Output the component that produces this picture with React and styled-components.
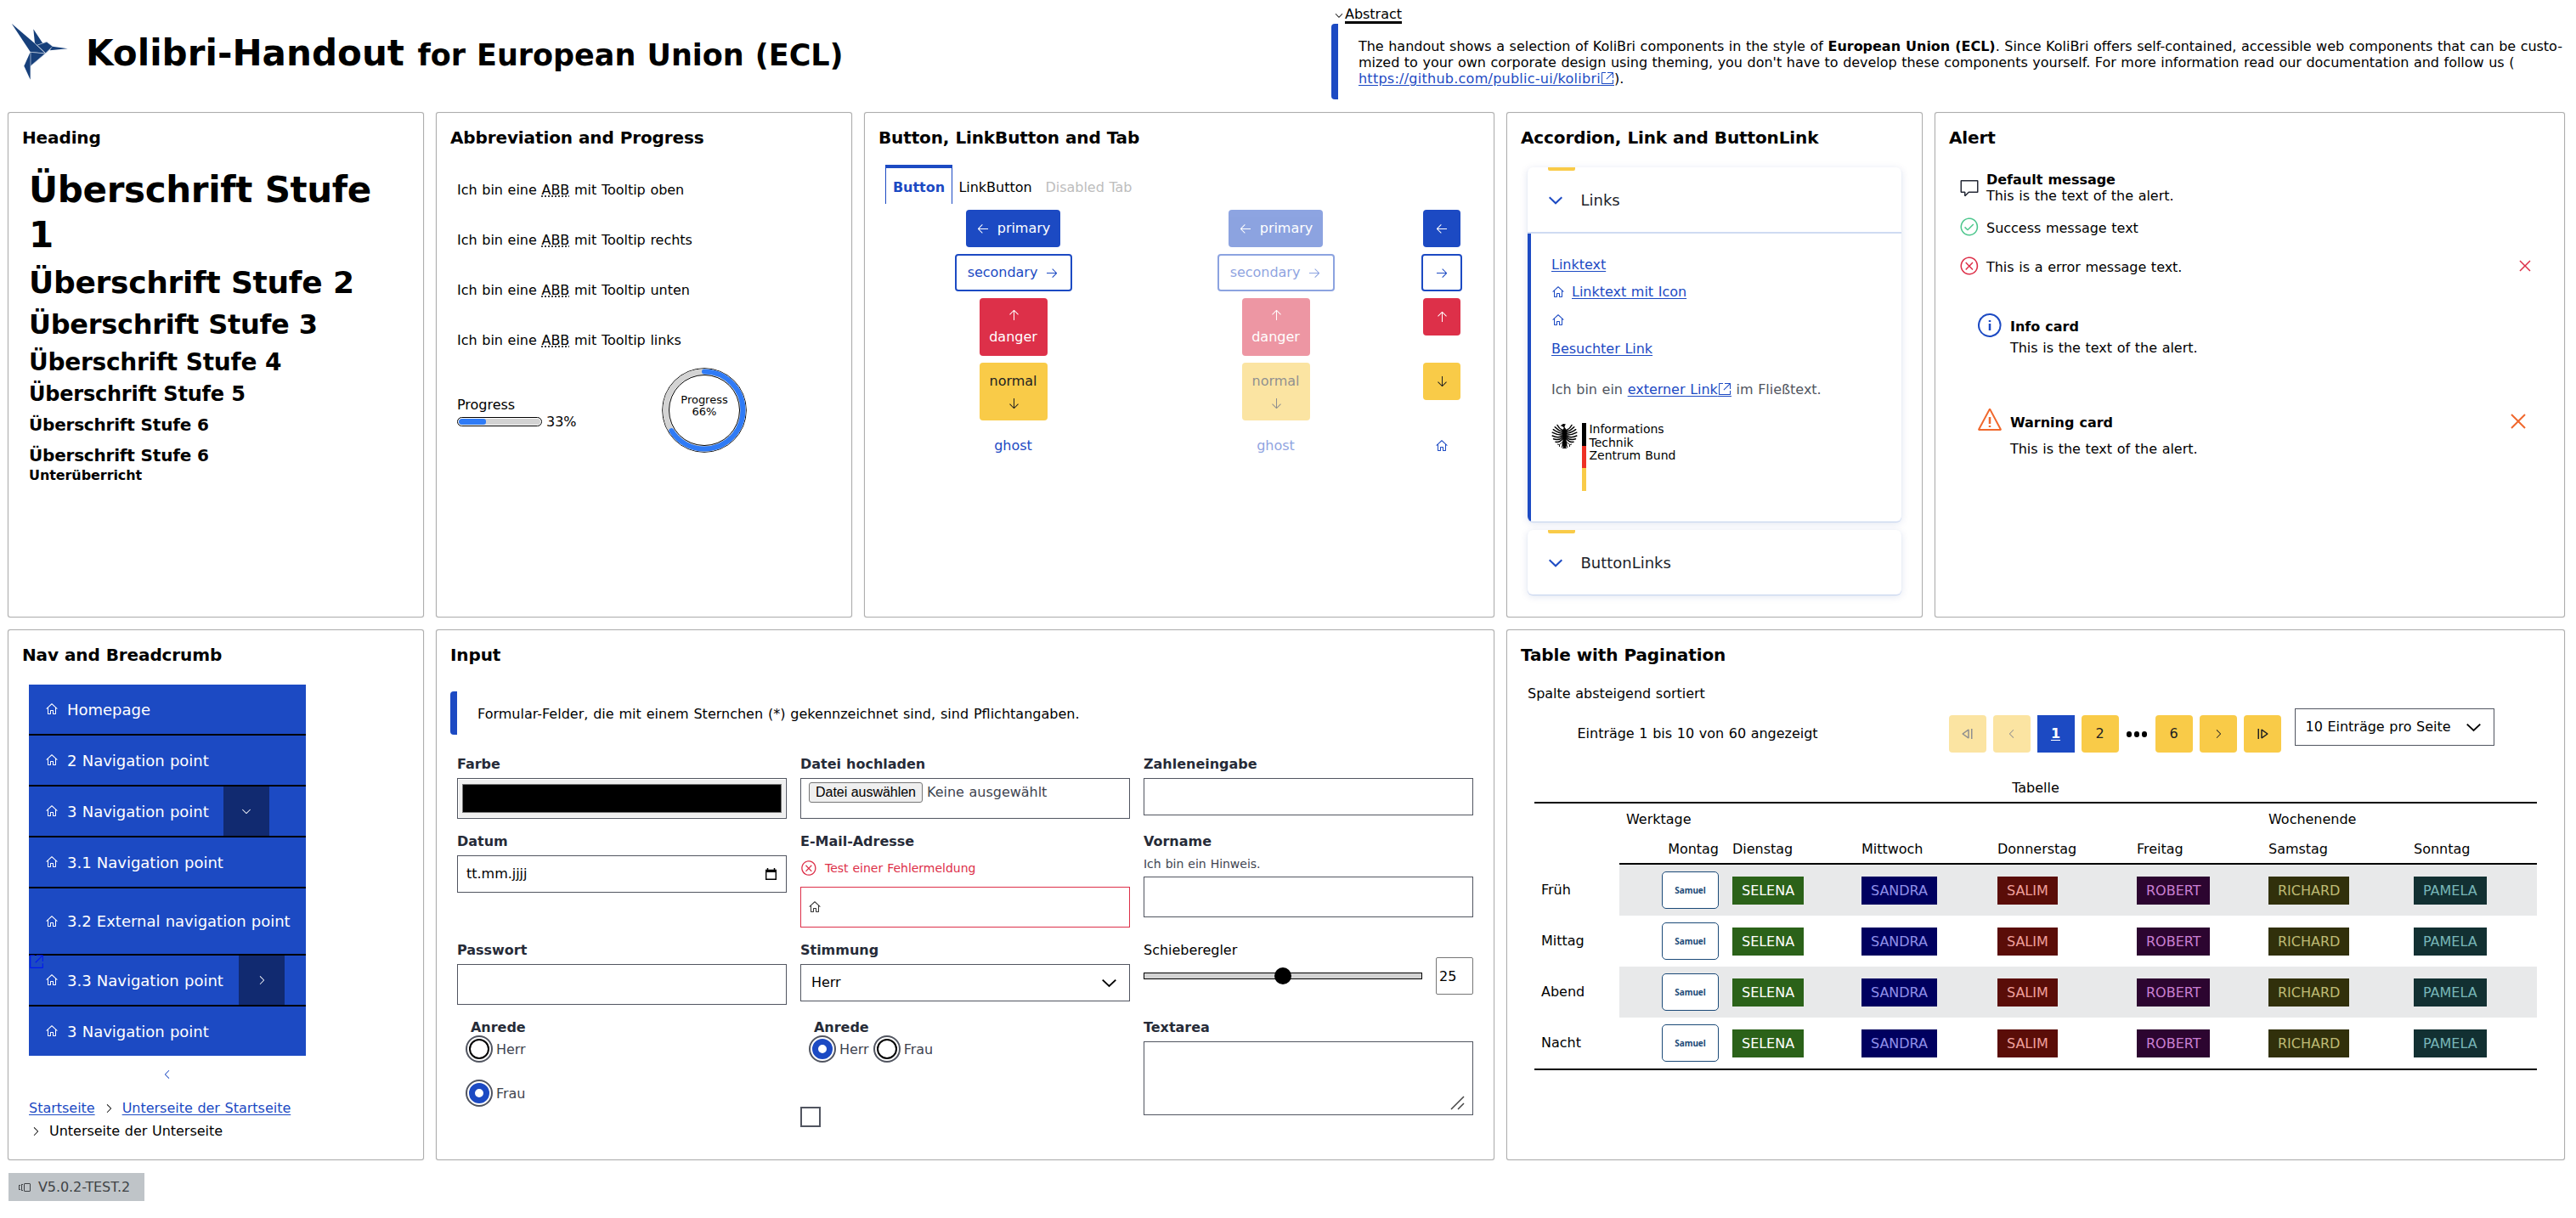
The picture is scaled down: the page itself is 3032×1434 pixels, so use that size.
import React from 'react';
import styled, { createGlobalStyle, css } from 'styled-components';
import {
  VscArrowLeft, VscArrowRight, VscArrowUp, VscArrowDown, VscHome, VscChevronDown, VscChevronRight,
  VscChevronLeft, VscLinkExternal, VscComment, VscPass, VscError, VscInfo, VscWarning, VscClose,
  VscVersions, VscDebugReverseContinue, VscDebugContinue,
} from 'react-icons/vsc';

const BLUE = '#1c4ac3';
const YELLOW = '#f9cb48';
const RED = '#dd3049';
const GREY = '#515560';

const GlobalStyle = createGlobalStyle`
  * { box-sizing: border-box; margin: 0; padding: 0; }
  body { background: #fff; }
  #root {
    font: 16px/20px Verdana, "DejaVu Sans", sans-serif;
    color: #000;
    letter-spacing: -0.02px;
    word-spacing: 0.6px;
  }
  button { letter-spacing: inherit; word-spacing: inherit; }
  svg { display: block; flex: none; }
  a { color: ${BLUE}; text-decoration: underline; text-underline-offset: 2px; }
`;

const Page = styled.div`
  width: 3032px;
  height: 1434px;
  padding: 0 14px 0 10px;
  overflow: hidden;
`;
const Header = styled.header`
  display: flex;
  height: 133px;
`;
const Brand = styled.div`
  display: flex;
  align-items: flex-start;
  width: 1558px;
  padding: 26.5px 0 0 3px;
`;
const PageTitle = styled.h1`
  font-size: 42px;
  line-height: 52px;
  margin: 10px 0 0 20px;
  white-space: nowrap;
  letter-spacing: 0.001em;
  word-spacing: 0.02em;
`;
const SubTitle = styled.span`
  font-size: 35px;
  letter-spacing: -0.001em;
  word-spacing: 0.03em;
`;
const Abstract = styled.section`
  padding-top: 7px;
  width: 1452px;
`;
const Summary = styled.div`
  display: flex;
  align-items: center;
  height: 21px;
  padding-left: 2px;
`;
const SummaryText = styled.span`
  border-bottom: 3px solid #000;
  height: 21px;
  line-height: 20px;
`;
const BarNote = styled.div`
  border-left: 8px solid ${BLUE};
  border-radius: 4px 0 0 4px;
  min-height: ${(p) => p.$h}px;
  padding: ${(p) => p.$pt}px 0 0 ${(p) => p.$pl}px;
  margin-top: ${(p) => p.$mt || 0}px;
  line-height: ${(p) => p.$lh || 20}px;
  letter-spacing: ${(p) => (p.$dense ? '-0.0016em' : '0')};
  word-spacing: ${(p) => (p.$dense ? '0.033em' : '0.05em')};
  white-space: nowrap;
`;
const RepoLink = styled.a`
  letter-spacing: 0.016em;
`;
const InlineIcon = styled.span`
  display: inline-block;
  vertical-align: -3px;
  border-bottom: 1px solid ${BLUE};
  color: ${BLUE};
`;

const Grid = styled.main`
  display: grid;
  grid-template-columns: repeat(12, 236px);
  grid-template-rows: 593px 623px;
  gap: 16px;
`;
const Card = styled.section`
  grid-column: span ${(p) => p.$span};
  padding: 16px;
  border-radius: 2px;
  box-shadow: 0 0 0 1px #aeaeae, 0 0 2px 1px rgba(0, 0, 0, 0.12);
`;
const CardTitle = styled.h2`
  font-size: 20px;
  line-height: 26px;
  letter-spacing: -0.006em;
  word-spacing: 0.01em;
  white-space: nowrap;
`;
const Body = styled.div`
  padding: ${(p) => p.$pt || 0}px 8px 0;
`;

const Heading = styled.div`
  font-weight: 700;
  font-size: ${(p) => p.$size}px;
  line-height: 1.25;
  letter-spacing: ${(p) => p.$track || '-0.009em'};
  word-spacing: 0.01em;
  margin-top: ${(p) => p.$mt || 0}px;
`;

const AbbrLine = styled.p`
  margin-bottom: 39px;
  white-space: nowrap;
`;
const Abbr = styled.abbr`
  text-decoration: underline dotted;
  text-underline-offset: 2px;
`;
const ProgressRow = styled.div`
  display: flex;
  margin-top: -16.5px;
`;
const ProgressBox = styled.div`
  width: 241px;
  padding-top: 33.5px;
`;
const BarLine = styled.div`
  display: flex;
  align-items: center;
  gap: 5px;
`;
const Track = styled.div`
  width: 100px;
  height: 11px;
  border: 1px solid #000;
  border-radius: 6px;
  padding: 1px;
`;
const TrackFill = styled.div`
  height: 7px;
  border-radius: 4px;
  background: #d3d3d3;
  overflow: hidden;
`;
const TrackValue = styled.div`
  height: 7px;
  border-radius: 3px;
  background: #2f7bf6;
`;
const Ring = styled.div`
  display: grid;
  align-items: start;
  > * { grid-area: 1 / 1; }
`;
const RingText = styled.div`
  padding-top: 31px;
  text-align: center;
  font-size: 13px;
  line-height: 14px;
`;

const Tabs = styled.div`
  display: flex;
  margin: 19px 0 7px 8px;
`;
const Tab = styled.div`
  width: ${(p) => p.$w}px;
  height: 46px;
  display: flex;
  align-items: center;
  justify-content: center;
  padding-top: 7px;
  ${(p) => p.$active && css`
    color: ${BLUE};
    font-weight: 700;
    padding-top: 3px;
    border: solid ${BLUE};
    border-width: 4px 1px 0;
  `}
  ${(p) => p.$disabled && css`color: #bdbdbd;`}
`;
const ButtonGrid = styled.div`
  display: grid;
  grid-template-columns: 309px 309px 82px;
  justify-items: center;
  align-items: start;
  row-gap: 8px;
  margin-left: 4px;
`;
const variants = {
  primary: css`background: ${BLUE}; color: #fff;`,
  secondary: css`border: 2px solid ${BLUE}; color: ${BLUE};`,
  danger: css`background: ${RED}; color: #fff;`,
  normal: css`background: ${YELLOW}; color: #222;`,
  ghost: css`color: ${BLUE};`,
};
const Button = styled.button`
  font: inherit;
  background: none;
  border: 0;
  border-radius: 4px;
  display: flex;
  flex-direction: ${(p) => (p.$stack ? 'column' : 'row')};
  align-items: center;
  justify-content: center;
  gap: ${(p) => (p.$stack ? 8 : 9)}px;
  width: ${(p) => p.$w}px;
  height: ${(p) => (p.$stack ? 68 : 44)}px;
  opacity: ${(p) => (p.$disabled ? 0.5 : 1)};
  ${(p) => variants[p.$kind]}
`;

const AccordionBox = styled.div`
  position: relative;
  width: 440px;
  margin: ${(p) => p.$mt}px 0 0 8px;
  border-radius: 6px;
  background: #fff;
  box-shadow: 0 1px 1px #c3d1ee, 0 2px 10px rgba(9, 49, 142, 0.13);
`;
const AccordionMark = styled.span`
  position: absolute;
  top: 0;
  left: 24px;
  width: 32px;
  height: 4px;
  background: ${YELLOW};
  border-radius: 0 0 2px 2px;
`;
const AccordionHead = styled.div`
  height: 76px;
  display: flex;
  align-items: center;
  gap: 21.5px;
  padding: 2px 0 0 25px;
  font-size: 18px;
  color: #1d1f2b;
`;
const AccordionBody = styled.div`
  height: 341px;
  border-top: 2px solid #cfdbf2;
  padding: 26.5px 0 0 28px;
  background: linear-gradient(${BLUE}, ${BLUE}) left / 4px 100% no-repeat;
  border-radius: 0 0 6px 6px;
`;
const LinkLine = styled.div`
  display: flex;
  align-items: center;
  height: 20px;
  gap: 8px;
  margin-top: ${(p) => p.$mt || 0}px;
  color: ${(p) => p.$color || BLUE};
  white-space: nowrap;
`;
const TextRun = styled.span`
  white-space: pre;
`;
const AgencyLogo = styled.div`
  display: flex;
  align-items: flex-start;
  margin-top: 28.5px;
  font-size: 14px;
  line-height: 15.6px;
`;
const FlagBar = styled.div`
  width: 4.5px;
  height: 80px;
  margin: 0 4px 0 5px;
  background: linear-gradient(#000 33.3%, #ee3124 33.3% 66.6%, ${YELLOW} 66.6%);
`;

const AlertRow = styled.div`
  display: flex;
  align-items: ${(p) => (p.$card ? 'flex-start' : 'center')};
  gap: 8px;
  margin: ${(p) => p.$mt}px 0 0 ${(p) => (p.$card ? 32 : 12)}px;
  padding-right: ${(p) => (p.$card ? 22 : 18)}px;
  color: ${(p) => p.$color};
`;
const AlertText = styled.div`
  flex: 1;
  color: #000;
  line-height: ${(p) => p.$lh || 20}px;
  padding-top: ${(p) => p.$pt || 0}px;
`;
const AlertBody = styled.div`
  margin-top: ${(p) => p.$mt || 0}px;
`;
const CloseSlot = styled.div`
  padding-top: ${(p) => p.$pt || 0}px;
`;

const Nav = styled.ul`
  list-style: none;
  width: 326px;
`;
const NavItem = styled.li`
  position: relative;
  display: flex;
  align-items: center;
  box-sizing: content-box;
  height: ${(p) => p.$h || 58}px;
  padding-left: 19px;
  gap: 10px;
  background: ${BLUE};
  color: #fff;
  font-size: 18px;
  white-space: nowrap;
  border-top: ${(p) => (p.$first ? '0' : '2px solid #000')};
`;
const NavLabel = styled.span`
  padding-top: 1px;
  width: ${(p) => (p.$w ? p.$w + 'px' : 'auto')};
`;
const NavToggle = styled.span`
  align-self: stretch;
  width: 54px;
  display: flex;
  align-items: center;
  justify-content: center;
  background: #112a70;
`;
const NavExternal = styled.span`
  position: absolute;
  left: 0;
  top: -2px;
  color: #0019ee;
`;
const Collapse = styled.div`
  width: 326px;
  display: flex;
  justify-content: center;
  color: ${BLUE};
  margin: 14px 0 22px;
`;
const Crumbs = styled.div`
  display: flex;
  align-items: center;
  gap: 8px;
  margin-bottom: 7px;
  white-space: nowrap;
`;

const Form = styled.div`
  display: grid;
  grid-template-columns: repeat(3, 388px);
  grid-template-rows: 91px 128px 91px auto;
  column-gap: 16px;
  margin: 24.5px 0 0 8px;
  color: #40444f;
`;
const Field = styled.div``;
const Label = styled.div`
  font-weight: ${(p) => (p.$plain ? 400 : 700)};
  color: ${(p) => (p.$plain ? '#000' : '#262b38')};
  margin-left: ${(p) => p.$ml || 0}px;
`;
const Hint = styled.div`
  font-size: 14px;
  margin: 6px 0 5.5px;
`;
const FieldError = styled.div`
  display: flex;
  align-items: center;
  gap: 9px;
  height: 20px;
  margin: 11px 0 12.5px;
  font-size: 14px;
  color: ${RED};
`;
const InputBox = styled.div`
  height: ${(p) => p.$h || 48}px;
  margin-top: ${(p) => (p.$flush ? 0 : 6.5)}px;
  border: 1px solid ${(p) => (p.$error ? RED : GREY)};
  display: flex;
  align-items: ${(p) => p.$align || 'center'};
  justify-content: space-between;
  padding: ${(p) => p.$pad || '0 10px'};
  color: #000;
`;
const ColorWell = styled.div`
  flex: 1;
  align-self: stretch;
  margin: 1px;
  border: 4px solid #efefef;
  border-width: 5px 4px;
  background: #000;
  box-shadow: inset 0 0 0 1px #777;
`;
const FileButton = styled.span`
  font-family: Arial, "Liberation Sans", sans-serif;
  border: 1px solid #767676;
  border-radius: 3px;
  background: #efefef;
  height: 24px;
  line-height: 22px;
  width: 134px;
  text-align: center;
  margin-right: 5px;
  word-spacing: 0;
`;
const FileText = styled.span`
  flex: 1;
  line-height: 23px;
  color: #40444f;
`;
const RangeRow = styled.div`
  display: flex;
  align-items: center;
  gap: 16px;
  margin-top: -1.5px;
`;
const RangeTrack = styled.div`
  width: 328px;
  height: 8px;
  border: 1px solid #000;
  background: #d3d3d3;
  display: flex;
  align-items: center;
  justify-content: center;
`;
const Thumb = styled.div`
  width: 20px;
  height: 20px;
  flex: none;
  border-radius: 50%;
  background: #000;
`;
const NumberBox = styled.div`
  width: 44px;
  height: 44px;
  border: 1px solid #767676;
  border-radius: 2px;
  color: #000;
  padding: 12px 0 0 3px;
`;
const RadioRow = styled.div`
  display: flex;
  align-items: center;
  height: 32px;
  margin: ${(p) => p.$mt}px 0 0 10px;
`;
const RadioRing = styled.span`
  width: 32px;
  height: 32px;
  border: 2px solid ${GREY};
  border-radius: 50%;
  padding: 2px;
  display: flex;
  &::before {
    content: '';
    flex: 1;
    border-radius: 50%;
    border: ${(p) => (p.$on ? `7px solid ${BLUE}` : '2px solid #000')};
  }
`;
const RadioText = styled.span`
  padding: 2px 5px 0 4px;
`;
const Checkbox = styled.div`
  width: 24px;
  height: 24px;
  border: 2px solid ${GREY};
  margin-top: 52px;
`;

const SortNote = styled.div`
  margin: 22.5px 0 7.5px 8px;
`;
const PagerRow = styled.div`
  display: flex;
  align-items: flex-start;
  gap: 8px;
  padding-left: 66.5px;
`;
const PagerInfo = styled.div`
  width: 429px;
  padding-top: 20px;
`;
const PageButton = styled.button`
  font: inherit;
  width: 44px;
  height: 44px;
  margin-top: 7.5px;
  border: 0;
  border-radius: ${(p) => (p.$current ? 0 : 4)}px;
  background: ${(p) => (p.$current ? BLUE : YELLOW)};
  color: ${(p) => (p.$current ? '#fff' : '#222')};
  font-weight: ${(p) => (p.$current ? 700 : 400)};
  text-decoration: ${(p) => (p.$current ? 'underline' : 'none')};
  text-underline-offset: 2px;
  opacity: ${(p) => (p.$disabled ? 0.5 : 1)};
  display: flex;
  align-items: center;
  justify-content: center;
`;
const Dots = styled.div`
  width: 27px;
  margin-top: 27px;
  display: flex;
  gap: 2.5px;
  justify-content: center;
`;
const Dot = styled.span`
  width: 6.5px;
  height: 6.5px;
  border-radius: 50%;
  background: #000;
`;
const PageSize = styled.div`
  width: 235px;
  height: 44px;
  margin-left: 8px;
  padding: 0 15px 0 12px;
  border: 1px solid ${GREY};
  display: flex;
  align-items: center;
  justify-content: space-between;
  white-space: nowrap;
`;
const TableWrap = styled.div`
  width: 1180px;
  margin: 32px 0 0 16px;
`;
const Caption = styled.div`
  text-align: center;
  margin-bottom: 6.5px;
`;
const TableGrid = styled.div`
  border: solid #000;
  border-width: 2px 0;
`;
const columns = '125px 152px 160px 164px 155px 171px 153px';
const TableRow = styled.div`
  display: grid;
  grid-template-columns: 100px 1fr;
`;
const Cells = styled.div`
  display: grid;
  grid-template-columns: ${columns};
  align-items: center;
  height: ${(p) => p.$h}px;
  border-bottom: ${(p) => (p.$line ? '2px solid #000' : '0')};
  background: ${(p) => (p.$stripe ? '#e8e9ea' : 'transparent')};
`;
const Cell = styled.div`
  padding: 0 8px;
  grid-column: span ${(p) => p.$span || 1};
  display: flex;
  justify-content: ${(p) => (p.$right ? 'flex-end' : 'flex-start')};
`;
const RowLabel = styled.div`
  padding: 0 8px;
  align-self: center;
`;
const NameTag = styled.span`
  height: 33px;
  line-height: 33px;
  padding: 0 11px;
  background: ${(p) => p.$bg};
  color: ${(p) => p.$fg};
`;
const SamuelTag = styled.span`
  width: 67px;
  height: 44px;
  border: 1px solid #1b4a78;
  border-radius: 5px;
  background: #fff;
  color: #1b4a78;
  font: 700 10px/42px "Noto Sans", sans-serif;
  text-align: center;
`;
const Version = styled.footer`
  display: flex;
  align-items: center;
  gap: 8px;
  width: 160px;
  height: 33px;
  margin-top: 16px;
  padding-left: 11px;
  background: #bfc4c8;
  color: #404346;
  letter-spacing: -0.005em;
`;

const Bird = () => (
  <svg width="68" height="68" viewBox="40 50 204 204" fill="#17407b" stroke="#c9d3e2" strokeWidth="2" strokeLinejoin="round">
    <path d="M119 72 152 122 132 129 124 123Z" stroke="none" />
    <path d="M42 52 126 124 161 157 108 152Z" stroke="none" />
    <path d="M131 129 166 117 187 133 162 157Z" />
    <path d="M186 133 240 141 177 147Z" stroke="none" />
    <path d="M109 153 161 158 109 202Z" />
    <path d="M108 153 108 250 86 202Z" stroke="none" />
    <path d="M119 117 162 157" fill="none" />
  </svg>
);

const wing = (
  <g fill="none" stroke="#000" strokeWidth="1.5" strokeLinecap="round">
    <path d="M13 8.500Q9 6.500 7 2.500" />
    <path d="M13.500 10.500Q8 9 4.200 4.800" />
    <path d="M14 12.500Q7 11.500 2.300 7.700" />
    <path d="M13.500 14Q7 14.500 1.200 11.200" />
    <path d="M13.500 15.500Q7 18 1.200 15" />
    <path d="M13.500 17Q8.500 21 2.500 18.800" />
    <path d="M13.500 18.500Q10 23 5 22.300" />
  </g>
);
const Eagle = () => (
  <svg width="31" height="31" viewBox="0 0 31 31">
    {wing}
    <g transform="translate(31 0) scale(-1 1)">{wing}</g>
    <path d="M15.500 5Q19 8 18 13L17.500 20 18.500 25 17 29 19 30H12L14 29 12.500 25 13.500 20 13 13Q12 8 15.500 5Z" />
    <path d="M17 8Q14 4.500 17 1.500 13.500.300 12.500 2L10.500 3.200 13 4Z" />
    <path d="M13.500 22 9.500 25.500M9.500 25.500 7 25M9.500 25.500 9.500 28M17.500 22 21.500 25.500M21.500 25.500 24 25M21.500 25.500 21.500 28M13.500 25 12 29M17.500 25 19 29" stroke="#000" strokeWidth=".9" fill="none" />
  </svg>
);

const Chevron = ({ color, w = 16, sw = 2 }) => (
  <svg width={w} height={w} viewBox="0 0 16 16" fill="none" stroke={color} strokeWidth={sw}>
    <path d="M.7 4.300 8 11.300 15.300 4.300" />
  </svg>
);

const RingGraphic = () => {
  const length = 2 * Math.PI * 45.5;
  return (
    <svg width="100" height="100" viewBox="0 0 100 100" fill="none">
      <circle cx="50" cy="50" r="49.300" stroke="#000" strokeWidth="1" />
      <circle cx="50" cy="50" r="45.500" stroke="#d3d3d3" strokeWidth="6.500" />
      <circle cx="50" cy="50" r="41.500" stroke="#000" strokeWidth="1" />
      <circle
        cx="50" cy="50" r="45.500" stroke="#2f7bf6" strokeWidth="6" strokeLinecap="round"
        strokeDasharray={`${length * 0.66} ${length}`} transform="rotate(-90 50 50)"
      />
    </svg>
  );
};

const buttonRows = [
  { kind: 'primary', w: 111, icon: VscArrowLeft, before: true, small: 44 },
  { kind: 'secondary', w: 138, icon: VscArrowRight, small: 48 },
  { kind: 'danger', w: 80, icon: VscArrowUp, before: true, stack: true, small: 44 },
  { kind: 'normal', w: 80, icon: VscArrowDown, stack: true, small: 44 },
  { kind: 'ghost', w: 80, small: 44 },
];
const LabelButton = ({ row, disabled }) => {
  const Icon = row.icon;
  return (
    <Button $kind={row.kind} $w={row.w} $stack={row.stack} $disabled={disabled}>
      {row.before && <Icon />}
      {row.kind}
      {Icon && !row.before && <Icon />}
    </Button>
  );
};

const navItems = [
  { label: 'Homepage' },
  { label: '2 Navigation point' },
  { label: '3 Navigation point', toggle: VscChevronDown, w: 174 },
  { label: '3.1 Navigation point' },
  { label: '3.2 External navigation point', h: 77 },
  { label: '3.3 Navigation point', toggle: VscChevronRight, w: 192, external: true },
  { label: '3 Navigation point' },
];

const people = [
  ['SELENA', '#2b6219', '#fff'],
  ['SANDRA', '#00005f', '#9090ea'],
  ['SALIM', '#5a0d08', '#f0a09c'],
  ['ROBERT', '#2c0530', '#c97fd2'],
  ['RICHARD', '#31300b', '#bfbb74'],
  ['PAMELA', '#123032', '#78b6b8'],
];
const days = ['Montag', 'Dienstag', 'Mittwoch', 'Donnerstag', 'Freitag', 'Samstag', 'Sonntag'];

export default function App() {
  return (
    <Page>
      <GlobalStyle />
      <Header>
        <Brand>
          <Bird />
          <PageTitle>Kolibri-Handout <SubTitle>for European Union (ECL)</SubTitle></PageTitle>
        </Brand>
        <Abstract>
          <Summary>
            <VscChevronDown size={14} />
            <SummaryText>Abstract</SummaryText>
          </Summary>
          <BarNote $dense $h={89} $pt={17} $pl={24} $lh={19.2}>
            The handout shows a selection of KoliBri components in the style of <b>European Union (ECL)</b>. Since KoliBri offers self-contained, accessible web components that can be custo-<br />
            mized to your own corporate design using theming, you don't have to develop these components yourself. For more information read our documentation and follow us (<br />
            <RepoLink>https://github.com/public-ui/kolibri</RepoLink><InlineIcon><VscLinkExternal /></InlineIcon>).
          </BarNote>
        </Abstract>
      </Header>

      <Grid>
        <Card $span={2}>
          <CardTitle>Heading</CardTitle>
          <Body $pt={23}>
            <Heading $size={42} $track="-0.008em">Überschrift Stufe<br />1</Heading>
            <Heading $size={36} $mt={7} $track="-0.008em">Überschrift Stufe 2</Heading>
            <Heading $size={32} $mt={7}>Überschrift Stufe 3</Heading>
            <Heading $size={28} $mt={7}>Überschrift Stufe 4</Heading>
            <Heading $size={24} $mt={5}>Überschrift Stufe 5</Heading>
            <Heading $size={20} $mt={8.5} $track="-0.0105em">Überschrift Stufe 6</Heading>
            <Heading $size={20} $mt={11} $track="-0.0105em">Überschrift Stufe 6</Heading>
            <Heading $size={16} $mt={1.5} $track="-0.005em">Unterüberricht</Heading>
          </Body>
        </Card>

        <Card $span={2}>
          <CardTitle>Abbreviation and Progress</CardTitle>
          <Body $pt={38.5}>
            {['oben', 'rechts', 'unten', 'links'].map((side) => (
              <AbbrLine key={side}>Ich bin eine <Abbr>ABB</Abbr> mit Tooltip {side}</AbbrLine>
            ))}
            <ProgressRow>
              <ProgressBox>
                Progress
                <BarLine>
                  <Track><TrackFill><TrackValue style={{ width: '33%' }} /></TrackFill></Track>
                  33%
                </BarLine>
              </ProgressBox>
              <Ring>
                <RingGraphic />
                <RingText>Progress<br />66%</RingText>
              </Ring>
            </ProgressRow>
          </Body>
        </Card>

        <Card $span={3}>
          <CardTitle>Button, LinkButton and Tab</CardTitle>
          <Tabs>
            <Tab $w={79} $active>Button</Tab>
            <Tab $w={101}>LinkButton</Tab>
            <Tab $w={119} $disabled>Disabled Tab</Tab>
          </Tabs>
          <ButtonGrid>
            {buttonRows.map((row) => {
              const Icon = row.icon || VscHome;
              return (
                <React.Fragment key={row.kind}>
                  <LabelButton row={row} />
                  <LabelButton row={row} disabled />
                  <Button $kind={row.kind} $w={row.small}><Icon /></Button>
                </React.Fragment>
              );
            })}
          </ButtonGrid>
        </Card>

        <Card $span={2}>
          <CardTitle>Accordion, Link and ButtonLink</CardTitle>
          <AccordionBox $mt={22}>
            <AccordionMark />
            <AccordionHead><Chevron color={BLUE} />Links</AccordionHead>
            <AccordionBody>
              <LinkLine><a>Linktext</a></LinkLine>
              <LinkLine $mt={12.3}><VscHome /><a>Linktext mit Icon</a></LinkLine>
              <LinkLine $mt={13.2}><VscHome /></LinkLine>
              <LinkLine $mt={14.5}><a>Besuchter Link</a></LinkLine>
              <LinkLine $mt={28} $color={GREY}>
                <TextRun>Ich bin ein <a>externer Link</a><InlineIcon><VscLinkExternal /></InlineIcon> im Fließtext.</TextRun>
              </LinkLine>
              <AgencyLogo>
                <Eagle />
                <FlagBar />
                <div>Informations<br />Technik<br />Zentrum Bund</div>
              </AgencyLogo>
            </AccordionBody>
          </AccordionBox>
          <AccordionBox $mt={10}>
            <AccordionMark />
            <AccordionHead><Chevron color={BLUE} />ButtonLinks</AccordionHead>
          </AccordionBox>
        </Card>

        <Card $span={3}>
          <CardTitle>Alert</CardTitle>
          <AlertRow $mt={27} $color="#262b38">
            <VscComment size={24} />
            <AlertText $lh={18.5} $pt={1}><b>Default message</b><br />This is the text of the alert.</AlertText>
          </AlertRow>
          <AlertRow $mt={15} $color="#4fc78e">
            <VscPass size={24} />
            <AlertText $pt={3}>Success message text</AlertText>
          </AlertRow>
          <AlertRow $mt={22} $color={RED}>
            <VscError size={24} />
            <AlertText $pt={3}>This is a error message text.</AlertText>
            <CloseSlot><VscClose size={24} /></CloseSlot>
          </AlertRow>
          <AlertRow $card $mt={42} $color={BLUE}>
            <VscInfo size={32} />
            <AlertText $pt={8}><b>Info card</b><AlertBody $mt={5}>This is the text of the alert.</AlertBody></AlertText>
          </AlertRow>
          <AlertRow $card $mt={59} $color="#f0682d">
            <VscWarning size={32} />
            <AlertText $pt={9}><b>Warning card</b><AlertBody $mt={11}>This is the text of the alert.</AlertBody></AlertText>
            <CloseSlot $pt={1}><VscClose size={32} /></CloseSlot>
          </AlertRow>
        </Card>

        <Card $span={2}>
          <CardTitle>Nav and Breadcrumb</CardTitle>
          <Body $pt={22}>
            <Nav>
              {navItems.map((item, i) => {
                const Toggle = item.toggle;
                return (
                  <NavItem key={i} $h={item.h} $first={i === 0}>
                    {item.external && <NavExternal><VscLinkExternal /></NavExternal>}
                    <VscHome size={16} />
                    <NavLabel $w={item.w}>{item.label}</NavLabel>
                    {Toggle && <NavToggle><Toggle size={16} /></NavToggle>}
                  </NavItem>
                );
              })}
            </Nav>
            <Collapse><VscChevronLeft /></Collapse>
            <Crumbs><a>Startseite</a><VscChevronRight /><a>Unterseite der Startseite</a></Crumbs>
            <Crumbs><VscChevronRight />Unterseite der Unterseite</Crumbs>
          </Body>
        </Card>

        <Card $span={5}>
          <CardTitle>Input</CardTitle>
          <BarNote $h={51} $pt={16.5} $pl={24} $mt={30}>
            Formular-Felder, die mit einem Sternchen (*) gekennzeichnet sind, sind Pflichtangaben.
          </BarNote>
          <Form>
            <Field>
              <Label>Farbe</Label>
              <InputBox $pad="0"><ColorWell /></InputBox>
            </Field>
            <Field>
              <Label>Datei hochladen</Label>
              <InputBox $align="flex-start" $pad="4px 9px">
                <FileButton>Datei auswählen</FileButton>
                <FileText>Keine ausgewählt</FileText>
              </InputBox>
            </Field>
            <Field>
              <Label>Zahleneingabe</Label>
              <InputBox $h={44} />
            </Field>
            <Field>
              <Label>Datum</Label>
              <InputBox $h={44}>
                tt.mm.jjjj
                <svg width="15" height="16" viewBox="0 0 15 16" fill="none" stroke="#000">
                  <path d="M1.700 3.500H13.300V14.300H1.700Z" strokeWidth="1.400" />
                  <path d="M1 4.500H14" strokeWidth="3" />
                  <path d="M3.500 1V4M11.500 1V4" strokeWidth="1.500" />
                </svg>
              </InputBox>
            </Field>
            <Field>
              <Label>E-Mail-Adresse</Label>
              <FieldError><VscError size={20} />Test einer Fehlermeldung</FieldError>
              <InputBox $flush $error $pad="0 8px"><VscHome color="#333" /></InputBox>
            </Field>
            <Field>
              <Label>Vorname</Label>
              <Hint>Ich bin ein Hinweis.</Hint>
              <InputBox $flush />
            </Field>
            <Field>
              <Label>Passwort</Label>
              <InputBox />
            </Field>
            <Field>
              <Label>Stimmung</Label>
              <InputBox $h={44} $pad="0 15px 0 12px">Herr<Chevron color="#000" w={17} sw={1.8} /></InputBox>
            </Field>
            <Field>
              <Label $plain>Schieberegler</Label>
              <RangeRow>
                <RangeTrack><Thumb /></RangeTrack>
                <NumberBox>25</NumberBox>
              </RangeRow>
            </Field>
            <Field>
              <Label $ml={16}>Anrede</Label>
              <RadioRow $mt={-0.5}><RadioRing /><RadioText>Herr</RadioText></RadioRow>
              <RadioRow $mt={20}><RadioRing $on /><RadioText>Frau</RadioText></RadioRow>
            </Field>
            <Field>
              <Label $ml={16}>Anrede</Label>
              <RadioRow $mt={-0.5}>
                <RadioRing $on /><RadioText>Herr</RadioText>
                <RadioRing /><RadioText>Frau</RadioText>
              </RadioRow>
              <Checkbox />
            </Field>
            <Field>
              <Label>Textarea</Label>
              <InputBox $h={87} $align="flex-end" $pad="0 9px 5px">
                <span />
                <svg width="17" height="17" viewBox="0 0 17 17" stroke="#444" strokeWidth="1.500">
                  <path d="M1 16 16 1M9 16 16 9" />
                </svg>
              </InputBox>
            </Field>
          </Form>
        </Card>

        <Card $span={5}>
          <CardTitle>Table with Pagination</CardTitle>
          <SortNote>Spalte absteigend sortiert</SortNote>
          <PagerRow>
            <PagerInfo>Einträge 1 bis 10 von 60 angezeigt</PagerInfo>
            <PageButton $disabled><VscDebugReverseContinue /></PageButton>
            <PageButton $disabled><VscChevronLeft /></PageButton>
            <PageButton $current>1</PageButton>
            <PageButton>2</PageButton>
            <Dots><Dot /><Dot /><Dot /></Dots>
            <PageButton>6</PageButton>
            <PageButton><VscChevronRight /></PageButton>
            <PageButton><VscDebugContinue /></PageButton>
            <PageSize>10 Einträge pro Seite<Chevron color="#000" w={17} sw={1.8} /></PageSize>
          </PagerRow>
          <TableWrap>
            <Caption>Tabelle</Caption>
            <TableGrid>
              <TableRow>
                <span />
                <Cells $h={37}><Cell $span={5}>Werktage</Cell><Cell $span={2}>Wochenende</Cell></Cells>
              </TableRow>
              <TableRow>
                <span />
                <Cells $h={35} $line>
                  {days.map((d, i) => <Cell key={d} $right={i === 0}>{d}</Cell>)}
                </Cells>
              </TableRow>
              {['Früh', 'Mittag', 'Abend', 'Nacht'].map((t, i) => (
                <TableRow key={t}>
                  <RowLabel>{t}</RowLabel>
                  <Cells $h={60} $stripe={i % 2 === 0}>
                    <Cell $right><SamuelTag>Samuel</SamuelTag></Cell>
                    {people.map(([name, bg, fg]) => (
                      <Cell key={name}><NameTag $bg={bg} $fg={fg}>{name}</NameTag></Cell>
                    ))}
                  </Cells>
                </TableRow>
              ))}
            </TableGrid>
          </TableWrap>
        </Card>
      </Grid>
      <Version><VscVersions />V5.0.2-TEST.2</Version>
    </Page>
  );
}
